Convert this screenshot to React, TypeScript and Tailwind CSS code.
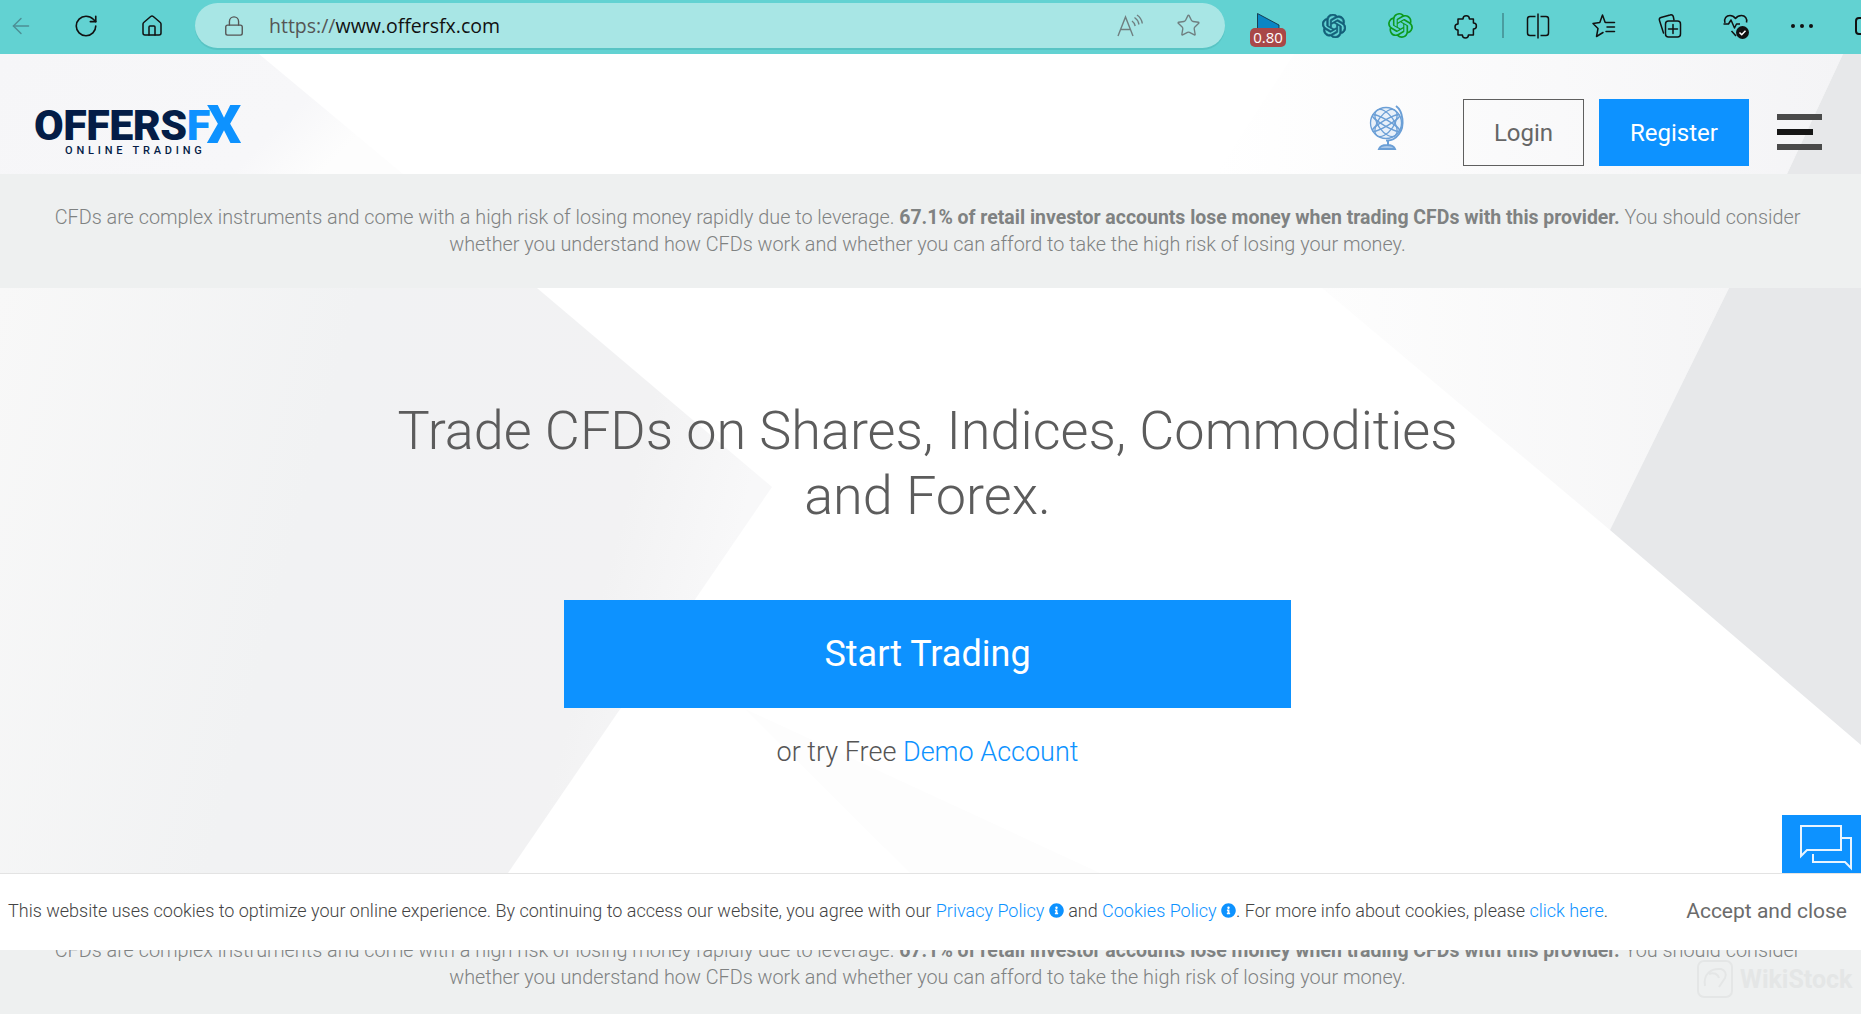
import React from "react";
import { ArrowLeft, RotateCw, Home, Lock, Star } from "lucide-react";
import { SiOpenai } from "react-icons/si";
import { FaInfoCircle } from "react-icons/fa";

const roboto = "font-['Roboto',sans-serif]";

function RiskText() {
  return (
    <p className="mx-auto w-[1760px] text-center text-[19.82px] leading-[27px] font-light text-[#7f8282]">
      CFDs are complex instruments and come with a high risk of losing money rapidly due to leverage.{" "}
      <b className="text-[19.45px] font-bold">67.1% of retail investor accounts lose money when trading CFDs with this provider.</b>{" "}
      You should consider whether you understand how CFDs work and whether you can afford to take the high risk of losing your money.
    </p>
  );
}

function ReadAloudIcon() {
  return (
    <svg width="26" height="24" viewBox="0 0 26 24" fill="none" stroke="#6f7f80" strokeWidth="1.400">
      <path d="M1 22 8.500 3 16 22M3.800 15.500h9.400" />
      <path d="M15 7c1.800 1.200 2.800 3 3.200 5M17.500 3.500c2.700 1.700 4 4.300 4.500 7M20 1c3 2 4.800 5 5.300 8.500" />
    </svg>
  );
}
function PuzzleIcon() {
  return (
    <svg width="26" height="26" viewBox="0 0 26 26" fill="none" stroke="#111" strokeWidth="1.500" strokeLinejoin="round">
      <path d="M10 6a3.200 3.200 0 0 1 6.400 0h4v4a3 3 0 0 1 0 6v6h-5a3 3 0 0 1-6 0H5v-5a3 3 0 0 1 0-6V6z" />
    </svg>
  );
}
function SplitIcon() {
  return (
    <svg width="24" height="26" viewBox="0 0 24 26" fill="none" stroke="#111" strokeWidth="1.500">
      <path d="M9.500 3.500H4a2.500 2.500 0 0 0-2.500 2.500v14A2.500 2.500 0 0 0 4 22.500h5.500M14.500 3.500H20A2.500 2.500 0 0 1 22.500 6v14a2.500 2.500 0 0 1-2.500 2.500h-5.500" />
      <path d="M12 .500v25" />
    </svg>
  );
}
function FavListIcon() {
  return (
    <svg width="26" height="26" viewBox="0 0 26 26" fill="none" stroke="#111" strokeWidth="1.500" strokeLinejoin="round" strokeLinecap="round">
      <path d="M14 9 11.500 2 8.800 9.500 2 10.500 7 15.500 5.500 23.500 12 19.500" />
      <path d="M14.500 9.500h9M16 14h7.500M15 18.500h8.500" />
    </svg>
  );
}
function CollectionsIcon() {
  return (
    <svg width="26" height="26" viewBox="0 0 26 26" fill="none" stroke="#111" strokeWidth="1.500" strokeLinecap="round">
      <path d="M6.500 20 2.500 7.500C2 6 2.500 5 4 4.500L13 2c1.500-.5 2.800 0 3.300 1.500L17 7" />
      <rect x="8.500" y="8" width="15" height="16" rx="3" />
      <path d="M16 11.500v9M11.500 16h9" />
    </svg>
  );
}
function HeartIcon() {
  return (
    <svg width="28" height="28" viewBox="0 0 28 28" fill="none" stroke="#111" strokeWidth="1.500" strokeLinejoin="round">
      <path d="M14 24 9.500 19M3 11C1.500 6.500 4.500 3.500 8 3.500c2.500 0 4 1 5.500 3 1.500-2 3.500-3 6-3 3.500 0 6 3 5 7" />
      <path d="M1.500 12h5l2.500-4 3.500 8 2-4h3.500" />
      <circle cx="20.500" cy="20.500" r="6.500" fill="#111" stroke="none" />
      <path d="m17.500 20.500 2.200 2.200 3.800-4" stroke="#fff" />
    </svg>
  );
}
function Globe() {
  return (
    <svg width="38" height="46" viewBox="0 0 38 46" fill="none" stroke="#6b9fd6" strokeWidth="1.300">
      <circle cx="17" cy="18" r="15.500" fill="#e8f0f9" />
      <ellipse cx="17" cy="18" rx="8" ry="15.500" transform="rotate(35 17 18)" />
      <ellipse cx="17" cy="18" rx="8" ry="15.500" transform="rotate(-35 17 18)" />
      <ellipse cx="17" cy="18" rx="3" ry="15.500" transform="rotate(60 17 18)" />
      <ellipse cx="17" cy="18" rx="3" ry="15.500" transform="rotate(-60 17 18)" />
      <path d="M27 1c7 5 9 20 3 28-3 4-8 7-13 6.500" strokeWidth="2" />
      <path d="M19 36v4M10 44c1-3 4-4 8-4s7 1 8 4z" strokeWidth="2" fill="#a9c7e8" />
    </svg>
  );
}
function ChatIcon() {
  return (
    <svg width="79" height="58" viewBox="0 0 79 58" fill="none" stroke="#e8f4ff" strokeWidth="2">
      <path d="M19 11h40v24H25l-6 6z" />
      <path d="M60 23h9v30l-6-6H31v-8" />
    </svg>
  );
}
function WikiMark() {
  return (
    <svg width="36" height="38" viewBox="0 0 36 38" fill="none" stroke="#e4e6e6" strokeWidth="2">
      <rect x="1" y="1" width="34" height="36" rx="6" />
      <path d="M8 26C6 14 14 8 24 9c4 1 6 5 4 9l-6 9M12 14c5-2 9 0 10 4" />
    </svg>
  );
}

const slot = "flex h-[46px] w-[66px] shrink-0 items-center justify-center";

export default function App() {
  return (
    <div className={`relative h-[1014px] w-[1861px] overflow-hidden bg-white ${roboto}`}>
      {/* Browser toolbar */}
      <div className="flex h-[54px] items-center overflow-hidden bg-[#62d2d2] pb-[3px] font-['Open_Sans',sans-serif]">
        <div className="flex w-[195px] shrink-0 items-center">
          <ArrowLeft className="ml-[8px] h-[26px] w-[26px] text-[#4c8f95]" strokeWidth={1.300} />
          <RotateCw className="ml-[39px] h-[26px] w-[26px] text-[#111]" strokeWidth={1.500} />
          <Home className="ml-[41px] h-[24px] w-[24px] text-[#111]" strokeWidth={1.500} />
        </div>
        <div className="flex h-[45px] w-[1030px] shrink-0 items-center rounded-[23px] bg-[#a8e6e5] shadow-[0_2px_0_#58c4c4]">
          <Lock className="ml-[28px] h-[22px] w-[22px] text-[#555]" strokeWidth={1.500} />
          <span className="ml-[24px] text-[19.5px] text-[#555]">https://</span>
          <span className="text-[19.5px] text-[#111]">www.offersfx.com</span>
          <div className="ml-auto flex items-center">
            <ReadAloudIcon />
            <Star className="mr-[24px] ml-[33px] h-[25px] w-[25px] text-[#6f7f80]" strokeWidth={1.300} />
          </div>
        </div>
        <div className={`relative ml-[10px] ${slot}`}>
          <svg className="absolute top-[10px] left-[22px]" width="23" height="16" viewBox="0 0 23 16">
            <path d="M.500.500 22 12v4H.500z" fill="#0a86c4" stroke="#123" strokeWidth=".8" />
          </svg>
          <span className="absolute top-[25px] left-[15px] flex h-[19px] w-[36px] items-center justify-center rounded-[5px] bg-[#a94848] text-[15px] text-white">0.80</span>
        </div>
        <div className={slot}><SiOpenai className="h-[24px] w-[24px] stroke-[#135f78] stroke-[0.700] text-[#135f78]" /></div>
        <div className={slot}><SiOpenai className="h-[25px] w-[25px] text-[#0d9b1f]" /></div>
        <div className={slot}><PuzzleIcon /></div>
        <div className="ml-[3px] h-[25px] w-[2px] shrink-0 bg-[#4a9da0]" />
        <div className={`ml-[1px] ${slot}`}><SplitIcon /></div>
        <div className={slot}><FavListIcon /></div>
        <div className={slot}><CollectionsIcon /></div>
        <div className={slot}><HeartIcon /></div>
        <div className={`${slot} gap-[5px]`}>
          <div className="h-[4px] w-[4px] rounded-full bg-[#111]" />
          <div className="h-[4px] w-[4px] rounded-full bg-[#111]" />
          <div className="h-[4px] w-[4px] rounded-full bg-[#111]" />
        </div>
        <div className="ml-[20px] h-[18px] w-[22px] shrink-0 rounded-[4px] border-2 border-[#111]" />
      </div>

      {/* Page */}
      <div className="relative">
        <svg className="absolute inset-0 h-[960px] w-[1861px]" viewBox="0 0 1861 960">
          <defs>
            <linearGradient id="gl" x1="0" y1="0" x2="1" y2="0.200">
              <stop offset="0" stopColor="#f8f8f8" />
              <stop offset="0.450" stopColor="#f1f2f3" />
              <stop offset="0.850" stopColor="#f2f2f3" />
              <stop offset="1" stopColor="#f8f8f9" />
            </linearGradient>
            <linearGradient id="gh" x1="0" y1="0" x2="1" y2="0.300">
              <stop offset="0" stopColor="#f6f6f8" />
              <stop offset="0.800" stopColor="#f7f7f9" />
              <stop offset="1" stopColor="#fdfdfd" />
            </linearGradient>
            <linearGradient id="gt" x1="0" y1="0" x2="1" y2="0">
              <stop offset="0" stopColor="#ffffff" />
              <stop offset="1" stopColor="#f4f4f6" />
            </linearGradient>
            <linearGradient id="gr" x1="0" y1="0" x2="1" y2="0">
              <stop offset="0" stopColor="#fdfdfd" />
              <stop offset="1" stopColor="#f5f5f6" />
            </linearGradient>
          </defs>
          <polygon points="0,0 259,0 403,120 0,120" fill="url(#gh)" />
          <polygon points="1294,0 1843,0 1787,120 1216,120" fill="url(#gt)" />
          <polygon points="1843,0 1861,0 1861,120 1787,120" fill="#e7e8ea" />
          <polygon points="0,234 537,234 772,433 508,819 0,819" fill="url(#gl)" />
          <polygon points="745,655 910,819 1100,819" fill="#fdfdfd" />
          <polygon points="1322,234 1729,234 1610,476" fill="url(#gr)" />
          <polygon points="1729,234 1861,234 1861,691 1610,476" fill="#e7e8ea" />
        </svg>

        <header className="relative flex h-[120px] items-end">
          <div className="mb-[18px] ml-[34px] flex w-[210px] flex-col items-start">
            <div className="h-[36px] text-[43px] leading-[36px] font-black tracking-[-0.500px] whitespace-nowrap text-[#041d47]">
              OFFERS<span className="text-[#0d92ff]">F<span className="relative top-[3px] ml-[-3px] text-[54px] leading-[36px] tracking-normal">X</span></span>
            </div>
            <div className="mt-[5px] ml-[31px] text-[11px] leading-[11px] font-medium tracking-[3.800px] whitespace-nowrap text-[#041d47]">ONLINE TRADING</div>
          </div>
          <div className="ml-auto flex items-end">
            <div className="mb-[23px]"><Globe /></div>
            <div className="mb-[8px] ml-[56px] flex h-[67px] w-[121px] items-center justify-center border border-[#5f5f5f] text-[24px] text-[#666]">Login</div>
            <div className="mb-[8px] ml-[15px] flex h-[67px] w-[150px] items-center justify-center bg-[#0d92ff] text-[24px] text-white">Register</div>
            <div className="mr-[39px] mb-[24px] ml-[28px] flex w-[45px] flex-col gap-[9px]">
              <div className="h-[6px] w-[45px] bg-[#4a4a4a]" />
              <div className="h-[6px] w-[36px] bg-[#161616]" />
              <div className="h-[6px] w-[45px] bg-[#4a4a4a]" />
            </div>
          </div>
        </header>

        <div className="relative flex h-[114px] items-center bg-[#eef0f0] pr-[6px]">
          <RiskText />
        </div>

        <main className="relative flex h-[619px] flex-col items-center pr-[6px]">
          <h1 className="mt-[110px] w-[1100px] text-center text-[54px] leading-[65px] font-light text-[#5c5c5c]">
            Trade CFDs on Shares, Indices, Commodities and Forex.
          </h1>
          <button className="mt-[72px] flex h-[108px] w-[727px] items-center justify-center bg-[#0d92ff] text-[36px] text-white">Start Trading</button>
          <p className="mt-[24px] text-[27px] leading-[40px] font-light text-[#555]">
            or try Free <span className="text-[#0d92ff]">Demo Account</span>
          </p>
        </main>

        <div className="relative flex h-[114px] items-center bg-[#eef0f0] pr-[6px]">
          <RiskText />
          <div className="absolute top-[53px] left-[1697px] flex items-center gap-[7px] text-[#e4e6e6]">
            <WikiMark />
            <span className="text-[25px] leading-none font-bold">WikiStock</span>
          </div>
        </div>
      </div>

      {/* Chat tab */}
      <div className="absolute top-[815px] left-[1782px] h-[58px] w-[79px] bg-[#0d92ff]">
        <ChatIcon />
      </div>

      {/* Cookie bar */}
      <div className="absolute top-[873px] left-0 flex h-[77px] w-[1861px] items-center border-t border-[#e3e3e3] bg-white pl-[8px]">
        <p className="pb-[4px] text-[18px] font-light whitespace-nowrap text-[#444]">
          This website uses cookies to optimize your online experience. By continuing to access our website, you agree with our{" "}
          <span className="text-[#0d92ff]">Privacy Policy</span>{" "}
          <FaInfoCircle className="mb-[2px] inline h-[15px] w-[15px] text-[#0d92ff]" /> and{" "}
          <span className="text-[#0d92ff]">Cookies Policy</span>{" "}
          <FaInfoCircle className="mb-[2px] inline h-[15px] w-[15px] text-[#0d92ff]" />. For more info about cookies, please{" "}
          <span className="text-[#0d92ff]">click here</span>.
        </p>
        <span className="mr-[14px] ml-auto text-[21px] text-[#6b6b6b]">Accept and close</span>
      </div>
    </div>
  );
}
